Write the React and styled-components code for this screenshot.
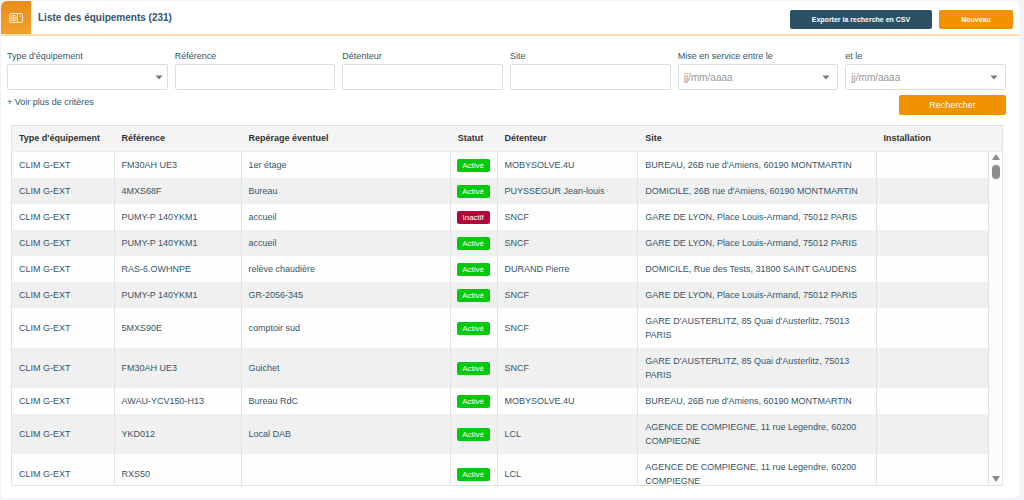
import React, { useState } from "react"
import styled, { createGlobalStyle } from "styled-components"

const colors = {
  page: "#f4f4f8",
  text: "#34566a",
  navy: "#2b5164",
  orange: "#f29100",
  line: "#e2e2e2",
  stripe: "#f0f0f0",
  head: "#f4f4f4",
  active: "#00c90a",
  inactive: "#b5063a",
}

const GlobalStyle = createGlobalStyle`
  * {
    box-sizing: border-box;
  }
  body {
    margin: 0;
    background: ${colors.page};
    color: ${colors.text};
    font-family: "Liberation Sans", Arial, sans-serif;
    font-size: 9px;
  }
  button, input, select {
    font-family: inherit;
  }
`

const Page = styled.div`
  display: flex;
  height: 100vh;
  padding: 1px 5px 2px 1px;
`

const Card = styled.main`
  display: flex;
  flex-direction: column;
  flex: 1;
  min-width: 0;
  background: #fff;
  border-radius: 6px;
  overflow: hidden;
`

const Header = styled.header`
  display: flex;
  align-items: stretch;
  height: 35px;
  flex-shrink: 0;
  border-bottom: 2px solid #ffdcaa;
`

const HeaderIcon = styled.div`
  display: flex;
  align-items: center;
  justify-content: center;
  width: 30px;
  background: linear-gradient(#e98b1c, #f2a12c);
`

const Title = styled.h1`
  flex: 1;
  align-self: center;
  margin: 0 0 0 7px;
  font-size: 10px;
  line-height: 14px;
`

const Actions = styled.div`
  display: flex;
  align-items: center;
  gap: 7px;
  padding: 3px 6px 0 0;
`

const Button = styled.button`
  width: ${(props) => props.$width};
  height: ${(props) => (props.$large ? "20px" : "19px")};
  padding: 0;
  border: 0;
  border-radius: 2px;
  background: ${(props) => (props.$dark ? colors.navy : colors.orange)};
  color: #fff;
  font-size: ${(props) => (props.$large ? "9px" : "7px")};
  font-weight: ${(props) => (props.$large ? "normal" : "bold")};
  cursor: pointer;
`

const Filters = styled.form`
  padding: 14px 13px 0 6px;
`

const FieldGrid = styled.div`
  display: grid;
  grid-template-columns: repeat(6, 1fr);
  gap: 7px;
`

const Field = styled.div`
  min-width: 0;
`

const Label = styled.label`
  display: block;
  height: 14px;
  line-height: 12px;
`

const Control = styled.div`
  position: relative;
  height: 26px;
`

const Input = styled.input`
  display: block;
  width: 100%;
  height: 100%;
  padding: 0 5px;
  border: 1px solid #dedede;
  border-radius: 2px;
  background: #fff;
  color: ${colors.text};
  font-size: 10px;
  &::placeholder {
    color: #999;
  }
`

const Select = styled(Input)`
  appearance: none;
`

const Caret = styled.svg`
  position: absolute;
  right: ${(props) => props.$right};
  top: 11px;
  pointer-events: none;
`

const FiltersFooter = styled.div`
  display: flex;
  justify-content: space-between;
  align-items: flex-start;
  padding-top: 5px;
`

const MoreLink = styled.a`
  color: inherit;
  line-height: 14px;
  text-decoration: none;
`

const List = styled.section`
  display: flex;
  flex: 1;
  min-height: 0;
  margin: 10px 16px 12px 10px;
  border: 1px solid ${colors.line};
`

const Scroller = styled.div`
  flex: 1;
  min-width: 0;
  overflow-y: auto;
  scrollbar-width: none;
`

const Table = styled.table`
  width: 100%;
  table-layout: fixed;
  border-collapse: separate;
  border-spacing: 0;
`

const Th = styled.th`
  position: sticky;
  top: 0;
  width: ${(props) => props.$width};
  height: 26px;
  padding: 0 7px 2px;
  border-bottom: 1px solid #ececec;
  background: ${colors.head};
  color: #333;
  text-align: left;
  white-space: nowrap;
  z-index: 1;
`

const Row = styled.tr`
  background: #fefefe;
  &:nth-child(even) {
    background: ${colors.stripe};
  }
`

const Td = styled.td`
  padding: 6px 7px;
  border-right: 1px solid ${colors.line};
  line-height: 14px;
`

const StatusCell = styled(Td)`
  padding: 0 6px;
`

const Badge = styled.span`
  display: block;
  width: 33px;
  border-radius: 2px;
  background: ${(props) => (props.$active ? colors.active : colors.inactive)};
  color: #fff;
  font-size: 8px;
  line-height: 13px;
  text-align: center;
`

const Rail = styled.div`
  display: flex;
  flex-direction: column;
  align-items: center;
  width: 13px;
  background: #fcfcfc;
`

const RailHead = styled.div`
  align-self: stretch;
  height: 26px;
  border-bottom: 1px solid #ececec;
  background: ${colors.head};
`

const RailTrack = styled.div`
  display: flex;
  flex: 1;
  flex-direction: column;
  align-items: center;
  justify-content: space-between;
  padding: 2px 0 3px;
`

const Thumb = styled.div`
  width: 8px;
  height: 14px;
  margin-top: 5px;
  border-radius: 4px;
  background: #8c8c8c;
`

const columns = [
  { title: "Type d'équipement", width: "10.5%" },
  { title: "Référence", width: "13%" },
  { title: "Repérage éventuel", width: "21.4%" },
  { title: "Statut", width: "4.8%" },
  { title: "Détenteur", width: "14.4%" },
  { title: "Site", width: "24.4%" },
  { title: "Installation", width: "11.5%" },
]

const LYON = "GARE DE LYON, Place Louis-Armand, 75012 PARIS"
const AUSTERLITZ = "GARE D'AUSTERLITZ, 85 Quai d'Austerlitz, 75013 PARIS"
const BUREAU = "BUREAU, 26B rue d'Amiens, 60190 MONTMARTIN"
const COMPIEGNE = "AGENCE DE COMPIEGNE, 11 rue Legendre, 60200 COMPIEGNE"

// reference, location, active, owner, site
const equipments = [
  ["FM30AH UE3", "1er étage", true, "MOBYSOLVE.4U", BUREAU],
  ["4MXS68F", "Bureau", true, "PUYSSEGUR Jean-louis", "DOMICILE, 26B rue d'Amiens, 60190 MONTMARTIN"],
  ["PUMY-P 140YKM1", "accueil", false, "SNCF", LYON],
  ["PUMY-P 140YKM1", "accueil", true, "SNCF", LYON],
  ["RAS-6.OWHNPE", "relève chaudière", true, "DURAND Pierre", "DOMICILE, Rue des Tests, 31800 SAINT GAUDENS"],
  ["PUMY-P 140YKM1", "GR-2056-345", true, "SNCF", LYON],
  ["5MXS90E", "comptoir sud", true, "SNCF", AUSTERLITZ],
  ["FM30AH UE3", "Guichet", true, "SNCF", AUSTERLITZ],
  ["AWAU-YCV150-H13", "Bureau RdC", true, "MOBYSOLVE.4U", BUREAU],
  ["YKD012", "Local DAB", true, "LCL", COMPIEGNE],
  ["RXS50", "", true, "LCL", COMPIEGNE],
]

const DropCaret = ({ right }) => (
  <Caret $right={right} width="8" height="5" viewBox="0 0 8 5" aria-hidden="true">
    <path d="M0.5 0.5h7L4 4.5z" fill="#777" />
  </Caret>
)

const TextField = ({ id, label, placeholder, caret }) => {
  const [value, setValue] = useState("")
  return (
    <Field>
      <Label htmlFor={id}>{label}</Label>
      <Control>
        <Input
          id={id}
          type="text"
          value={value}
          placeholder={placeholder}
          onChange={(e) => setValue(e.target.value)}
        />
        {caret && <DropCaret right="8px" />}
      </Control>
    </Field>
  )
}

const App = () => {
  return (
    <>
      <GlobalStyle />
      <Page>
        <Card>
          <Header>
            <HeaderIcon>
              <svg width="14" height="10" viewBox="0 0 14 10" fill="none" stroke="#fff3df" aria-hidden="true">
                <rect x="0.5" y="0.5" width="13" height="9" rx="1.5" />
                <rect x="1.8" y="2.3" width="5.4" height="5.4" rx="2" strokeWidth="0.9" />
                <path d="M4.5 2v6M1.5 5h6" />
                <path d="M8.5 0.5v9" strokeWidth="0.8" />
                <path d="M10.5 3h1.5" strokeWidth="0.8" />
              </svg>
            </HeaderIcon>
            <Title>Liste des équipements (231)</Title>
            <Actions>
              <Button type="button" $dark $width="142px">
                Exporter la recherche en CSV
              </Button>
              <Button type="button" $width="74px">
                Nouveau
              </Button>
            </Actions>
          </Header>
          <Filters onSubmit={(e) => e.preventDefault()}>
            <FieldGrid>
              <Field>
                <Label htmlFor="type">Type d'équipement</Label>
                <Control>
                  <Select as="select" id="type" defaultValue="">
                    <option value="" />
                    <option value="clim">CLIM G-EXT</option>
                  </Select>
                  <DropCaret right="5px" />
                </Control>
              </Field>
              <TextField id="reference" label="Référence" />
              <TextField id="owner" label="Détenteur" />
              <TextField id="site" label="Site" />
              <TextField id="from" label="Mise en service entre le" placeholder="jj/mm/aaaa" caret />
              <TextField id="to" label="et le" placeholder="jj/mm/aaaa" caret />
            </FieldGrid>
            <FiltersFooter>
              <MoreLink href="#criteres">+ Voir plus de critères</MoreLink>
              <Button type="submit" $large $width="107px">
                Rechercher
              </Button>
            </FiltersFooter>
          </Filters>
          <List>
            <Scroller>
              <Table>
                <thead>
                  <tr>
                    {columns.map((column) => (
                      <Th key={column.title} scope="col" $width={column.width}>
                        {column.title}
                      </Th>
                    ))}
                  </tr>
                </thead>
                <tbody>
                  {equipments.map(([reference, location, active, owner, site], i) => (
                    <Row key={i}>
                      <Td>CLIM G-EXT</Td>
                      <Td>{reference}</Td>
                      <Td>{location}</Td>
                      <StatusCell>
                        <Badge $active={active}>{active ? "Activé" : "Inactif"}</Badge>
                      </StatusCell>
                      <Td>{owner}</Td>
                      <Td>{site}</Td>
                      <Td />
                    </Row>
                  ))}
                </tbody>
              </Table>
            </Scroller>
            <Rail aria-hidden="true">
              <RailHead />
              <RailTrack>
                <div>
                  <svg width="8" height="6" viewBox="0 0 8 6" display="block">
                    <path d="M4 0l4 6H0z" fill="#8c8c8c" />
                  </svg>
                  <Thumb />
                </div>
                <svg width="8" height="6" viewBox="0 0 8 6" display="block">
                  <path d="M4 6L0 0h8z" fill="#8c8c8c" />
                </svg>
              </RailTrack>
            </Rail>
          </List>
        </Card>
      </Page>
    </>
  )
}

export default App
